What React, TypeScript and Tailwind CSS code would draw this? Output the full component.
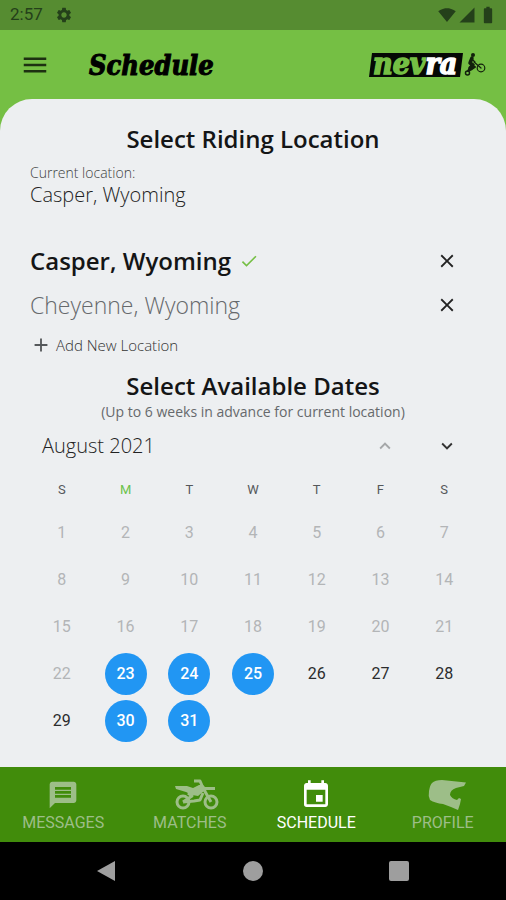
import {
  MdAdd,
  MdBatteryFull,
  MdCheck,
  MdClose,
  MdEvent,
  MdKeyboardArrowDown,
  MdKeyboardArrowUp,
  MdMenu,
  MdMessage,
  MdSettings,
  MdSignalCellular4Bar,
  MdSignalWifi4Bar,
} from "react-icons/md";

const weekDays = ["S", "M", "T", "W", "T", "F", "S"];
const selectedDays = [23, 24, 25, 30, 31];
const firstOpenDay = 23;

const NevraLogo = () => (
  <svg width="120" height="48" viewBox="0 -10 120 48" role="img" aria-label="nevra">
    <path d="M4 2H95L92 26H1Z" fill="#050805" />
    <text
      x="5"
      y="23"
      fontSize="30"
      fontWeight="700"
      fontStyle="italic"
      fontFamily="'DejaVu Serif Condensed', 'DejaVu Serif', serif"
      fill="#75bf44"
      stroke="#75bf44"
      strokeWidth="1.5"
    >
      nev
      <tspan fill="#fff" stroke="#fff">ra</tspan>
    </text>
    <g fill="none" stroke="#12200c" strokeLinecap="round" strokeLinejoin="round">
      <circle cx="113" cy="17" r="3.8" strokeWidth="1.2" />
      <circle cx="99.5" cy="22" r="2" strokeWidth="1.5" />
      <path d="M104 7L102 12L105 14L102 17" strokeWidth="3.5" />
      <path d="M100 20L103 15L107 16L104 18Z" fill="#12200c" strokeWidth="2" />
      <path d="M104 8L107 11M106 11L113 17" strokeWidth="1.2" />
    </g>
    <circle cx="105" cy="4" r="2" fill="#12200c" />
  </svg>
);

const DirtBikeIcon = () => (
  <svg
    className="ml-[14px]"
    width="44"
    height="32"
    viewBox="0 0 44 32"
    fill="none"
    stroke="currentColor"
    strokeLinejoin="round"
    aria-hidden="true"
  >
    <circle cx="8" cy="23" r="6" strokeWidth="3" />
    <circle cx="36" cy="23" r="6" strokeWidth="3" />
    <path d="M19 2H25L28 9L36 23" strokeWidth="3" />
    <path d="M0 7H12L18 9L24 6H28L30 8H40V11H32L29 12L23 17L17 16L11 13L1 10Z" fill="currentColor" stroke="none" />
    <path d="M13 14L17 17L8 23M8 23L19 22L25 21L28 14" strokeWidth="3" />
  </svg>
);

const HelmetIcon = () => (
  <svg className="ml-[9px]" width="38" height="32" viewBox="0 0 38 32" fill="currentColor" aria-hidden="true">
    <path d="M4 4Q7 1 14 1L38 3.5L36 7L28 9Q22 11 22 16Q24 20 29 21L31 19L33 20L32 25L30 31L23 28L15 25Q7 24 2 21Q0 17 1 12Q2 6 4 4Z" />
  </svg>
);

const tabs = [
  { label: "MESSAGES", icon: <MdMessage size={32} /> },
  { label: "MATCHES", icon: <DirtBikeIcon /> },
  { label: "SCHEDULE", icon: <MdEvent size={32} />, active: true },
  { label: "PROFILE", icon: <HelmetIcon /> },
];

const LocationRow = ({ name, current }: { name: string; current?: boolean }) => (
  <li className="flex h-11 items-center justify-between pr-[18px]">
    <button
      className={
        current
          ? "flex items-center gap-2 text-2xl font-semibold text-[#141516]"
          : "flex items-center gap-2 text-[23px] font-light text-[#66696c]"
      }
    >
      {name}
      {current && <MdCheck size={20} className="text-[#75bf44]" />}
    </button>
    <button aria-label={`Remove ${name}`}>
      <MdClose size={22} className="text-[#222]" />
    </button>
  </li>
);

const Day = ({ day }: { day: number }) => {
  const selected = selectedDays.includes(day);
  const closed = day < firstOpenDay;
  return (
    <div className="flex h-[47px] items-center justify-center">
      <button
        disabled={closed}
        aria-pressed={selected}
        className={
          selected
            ? "size-[42px] rounded-full bg-[#2196f3] font-medium text-white"
            : closed
              ? "size-[42px] rounded-full text-[#b3b5b7]"
              : "size-[42px] rounded-full text-[#2b2c2d]"
        }
      >
        {day}
      </button>
    </div>
  );
};

const App = () => {
  return (
    <div className="flex min-h-screen flex-col bg-[#75bf44] font-['Open_Sans',sans-serif]">
      <div className="flex h-[30px] items-center justify-between bg-[#568c31] px-2 font-['Roboto',sans-serif] text-[#24401a]">
        <div className="flex items-center gap-3 pl-[2px]">
          <span className="text-[17px]">2:57</span>
          <MdSettings size={18} />
        </div>
        <div className="flex items-center gap-[2px]">
          <MdSignalWifi4Bar size={18} />
          <MdSignalCellular4Bar size={18} />
          <MdBatteryFull size={20} />
        </div>
      </div>

      <header className="flex h-[69px] items-center pr-[18px] pl-5">
        <button aria-label="Open menu">
          <MdMenu size={30} className="text-[#1d3011]" />
        </button>
        <h1 className="grow pt-1 pl-[39px] font-['DejaVu_Serif_Condensed','DejaVu_Serif',serif] text-[27px] font-bold text-black italic [-webkit-text-stroke:1px_black]">
          Schedule
        </h1>
        <NevraLogo />
      </header>

      <main className="grow rounded-t-[32px] bg-[#edeff1] px-[30px] pt-6">
        <h2 className="text-center text-2xl leading-8 font-semibold text-[#141516]">
          Select Riding Location
        </h2>
        <p className="mt-2 text-sm leading-5 font-light text-[#3d3f41]">Current location:</p>
        <p className="text-xl leading-6 font-light text-[#222]">Casper, Wyoming</p>

        <ul className="mt-8">
          <LocationRow name="Casper, Wyoming" current />
          <LocationRow name="Cheyenne, Wyoming" />
        </ul>
        <button className="flex h-9 items-center gap-1 text-[15px] font-light text-[#333]">
          <MdAdd size={22} className="text-[#55585b]" />
          Add New Location
        </button>

        <h2 className="mt-[7px] text-center text-2xl leading-8 font-semibold text-[#141516]">
          Select Available Dates
        </h2>
        <p className="text-center text-sm leading-5 text-[#66696c]">
          (Up to 6 weeks in advance for current location)
        </p>
        <div className="mt-2 flex h-8 items-center pr-[18px] pl-3">
          <span className="grow text-xl font-light text-[#222]">August 2021</span>
          <button aria-label="Previous month" className="mr-10" disabled>
            <MdKeyboardArrowUp size={22} className="text-[#a5a7a9]" />
          </button>
          <button aria-label="Next month">
            <MdKeyboardArrowDown size={22} className="text-[#333]" />
          </button>
        </div>

        <div className="mt-3 grid grid-cols-7 font-['Roboto',sans-serif] text-[13px] leading-8">
          {weekDays.map((name, i) => (
            <span key={i} className={i === 1 ? "text-center text-[#6cc24a]" : "text-center text-[#55585b]"}>
              {name}
            </span>
          ))}
        </div>
        <div className="mt-[3px] grid grid-cols-7 pb-[23px] font-['Roboto',sans-serif] text-base">
          {Array.from({ length: 31 }, (_, i) => (
            <Day key={i} day={i + 1} />
          ))}
        </div>
      </main>

      <nav className="grid h-[75px] grid-cols-4 bg-[#418c0b] font-['Roboto',sans-serif] text-base leading-6">
        {tabs.map((tab) => (
          <a
            key={tab.label}
            href="#"
            className={
              tab.active
                ? "flex flex-col items-center pt-3 text-white"
                : "flex flex-col items-center pt-3 text-[#9dbe88]"
            }
          >
            {tab.icon}
            {tab.label}
          </a>
        ))}
      </nav>

      <div className="flex h-[58px] items-center justify-center gap-[126px] bg-black text-[#9e9e9e]">
        <button aria-label="Back">
          <svg width="20" height="22" viewBox="0 0 20 22" fill="currentColor">
            <path d="M18 1V21L0 11Z" />
          </svg>
        </button>
        <button aria-label="Home" className="size-5 rounded-full bg-[#9e9e9e]" />
        <button aria-label="Recent apps" className="size-5 rounded-xs bg-[#9e9e9e]" />
      </div>
    </div>
  );
};

export default App;
